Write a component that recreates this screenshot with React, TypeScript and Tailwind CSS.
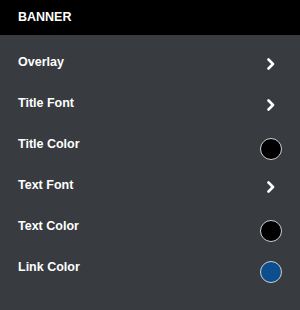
const rows: { label: string; kind: "chevron" | "color"; color?: string }[] = [
  { label: "Overlay", kind: "chevron" },
  { label: "Title Font", kind: "chevron" },
  { label: "Title Color", kind: "color", color: "#000000" },
  { label: "Text Font", kind: "chevron" },
  { label: "Text Color", kind: "color", color: "#000000" },
  { label: "Link Color", kind: "color", color: "#0f4e8e" },
];

function Chevron() {
  return (
    <svg width="8" height="12" viewBox="0 0 8 12" className="mt-[3px]">
      <polyline
        points="1.5,1.5 6,6 1.5,10.5"
        fill="none"
        stroke="white"
        strokeWidth="2.6"
        strokeLinecap="round"
        strokeLinejoin="round"
      />
    </svg>
  );
}

export default function App() {
  return (
    <div className="w-[300px] h-[310px] bg-[#383b40] font-['Liberation_Sans',Arial,sans-serif] text-white">
      <div className="h-[35px] bg-black flex items-center px-[18px]">
        <span className="text-[12.5px] font-bold">BANNER</span>
      </div>
      <ul className="pt-[7px]">
        {rows.map((row) => (
          <li
            key={row.label}
            className="h-[41px] flex items-center justify-between pl-[18px] pr-[18px]"
          >
            <span className="text-[12.5px] font-bold">{row.label}</span>
            <span className="w-[22px] flex justify-center">
              {row.kind === "chevron" ? (
                <Chevron />
              ) : (
                <span
                  className="mt-[8px] w-[22px] h-[22px] rounded-full border-[1.5px] border-[#d0d0d0]"
                  style={{ backgroundColor: row.color }}
                />
              )}
            </span>
          </li>
        ))}
      </ul>
    </div>
  );
}
